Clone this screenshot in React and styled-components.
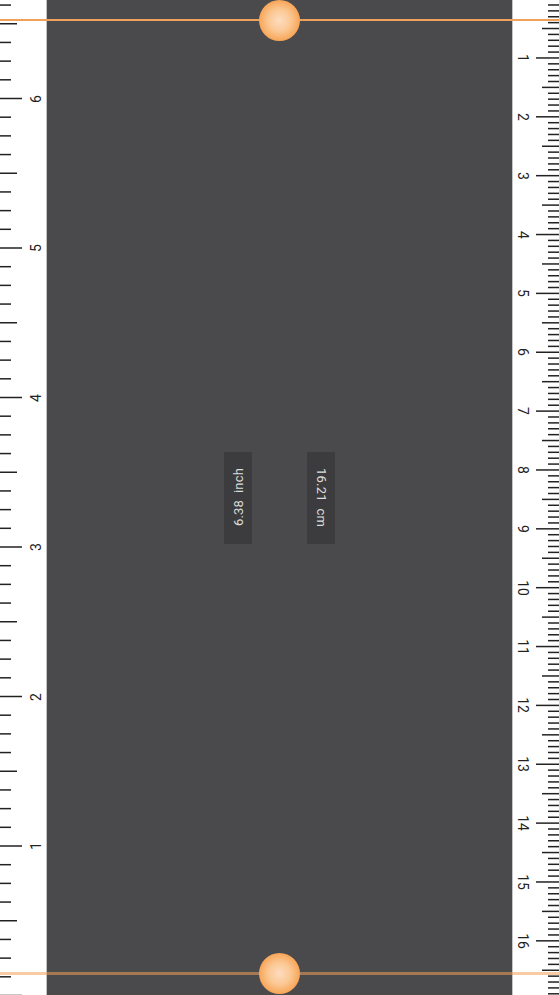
import React from "react";
import styled, { createGlobalStyle } from "styled-components";

const GlobalStyle = createGlobalStyle`
  html, body {
    margin: 0;
    padding: 0;
    background: #4a4a4c;
  }
  * {
    box-sizing: border-box;
  }
`;

const PAGE_H = 995;
const PX_PER_INCH = 149.5;
const PX_PER_CM = PX_PER_INCH / 2.54;
const INCH_ZERO = 995.5;
const CM_ZERO = -0.9;
const TOP_LINE = 20;
const BOTTOM_LINE = 973;

const Screen = styled.div`
  position: relative;
  display: flex;
  width: 559px;
  height: ${PAGE_H}px;
  overflow: hidden;
  font-family: Roboto, "Liberation Sans", sans-serif;
`;

const Ruler = styled.div`
  position: relative;
  flex: 0 0 ${(p) => p.$width}px;
  height: 100%;
  background: #ffffff;
  border-${(p) => (p.$side === "left" ? "right" : "left")}: 1px solid #c4c4c4;
`;

const TickLayer = styled.svg`
  position: absolute;
  top: 0;
  left: 0;
`;

const Number = styled.span`
  position: absolute;
  left: ${(p) => p.$x}px;
  width: 16px;
  height: 16px;
  margin-top: -8px;
  margin-left: -8px;
  display: flex;
  align-items: center;
  justify-content: center;
  font-size: 14px;
  color: #222;
  transform: rotate(${(p) => (p.$side === "left" ? -90 : 90)}deg);
`;

const Board = styled.div`
  flex: 1;
  height: 100%;
  background: #4a4a4c;
  display: flex;
  align-items: center;
  justify-content: center;
  gap: 55px;
  padding-top: ${TOP_LINE + BOTTOM_LINE - PAGE_H + 1}px;
`;

const Readout = styled.div`
  width: 28px;
  height: 92px;
  background: #3c3c3e;
  display: flex;
  align-items: center;
  justify-content: center;
`;

const ReadoutText = styled.span`
  writing-mode: vertical-rl;
  transform: ${(p) => (p.$up ? "rotate(180deg)" : "none")};
  font-size: 13px;
  letter-spacing: 0.2px;
  color: #dcdcdc;
  white-space: pre;
`;

const Guide = styled.div`
  position: absolute;
  left: 0;
  right: 0;
  top: ${(p) => p.$y}px;
  height: ${(p) => (p.$soft ? 3 : 1.5)}px;
  margin-top: ${(p) => (p.$soft ? -1.5 : -0.75)}px;
  background: ${(p) => (p.$soft ? "rgba(242, 160, 90, 0.55)" : "#f0a25c")};
  pointer-events: none;
`;

const Handle = styled.div`
  position: absolute;
  left: 259px;
  top: ${(p) => p.$y - 20.5}px;
  width: 41px;
  height: 41px;
  border-radius: 50%;
  background: radial-gradient(
    circle at 50% 50%,
    #fddcc0 0%,
    #fbc894 38%,
    #f8aa60 66%,
    #f6973c 84%,
    #f28f36 100%
  );
`;

function InchTicks() {
  const ticks = [];
  for (let i = 0; ; i++) {
    const y = INCH_ZERO - (i * PX_PER_INCH) / 8;
    if (y < -2) break;
    const len = i % 8 === 0 ? 22 : i % 4 === 0 ? 17 : 11;
    ticks.push(<line key={i} x1="0" x2={len} y1={y} y2={y} />);
  }
  return (
    <TickLayer width="46" height={PAGE_H} stroke="#222" strokeWidth="1.5">
      {ticks}
    </TickLayer>
  );
}

function CmTicks() {
  const ticks = [];
  for (let j = 0; ; j++) {
    const y = CM_ZERO + (j * PX_PER_CM) / 10;
    if (y > PAGE_H + 2) break;
    if (y < -2) continue;
    const len = j % 10 === 0 ? 23 : j % 5 === 0 ? 17 : 11;
    ticks.push(<line key={j} x1={46 - len} x2="46" y1={y} y2={y} />);
  }
  return (
    <TickLayer width="46" height={PAGE_H} stroke="#222" strokeWidth="1.5">
      {ticks}
    </TickLayer>
  );
}

export default function App() {
  const inches = [1, 2, 3, 4, 5, 6];
  const cms = Array.from({ length: 16 }, (_, k) => k + 1);

  return (
    <>
      <GlobalStyle />
      <Screen>
        <Ruler $side="left" $width={47}>
          <InchTicks />
          {inches.map((n) => (
            <Number
              key={n}
              $side="left"
              $x={36}
              style={{ top: INCH_ZERO - n * PX_PER_INCH }}
            >
              {n}
            </Number>
          ))}
        </Ruler>

        <Board>
          <Readout>
            <ReadoutText $up>6.38  inch</ReadoutText>
          </Readout>
          <Readout>
            <ReadoutText>16.21  cm</ReadoutText>
          </Readout>
        </Board>

        <Ruler $side="right" $width={47}>
          <CmTicks />
          {cms.map((n) => (
            <Number
              key={n}
              $side="right"
              $x={10}
              style={{ top: CM_ZERO + n * PX_PER_CM }}
            >
              {n}
            </Number>
          ))}
        </Ruler>

        <Guide $y={TOP_LINE} />
        <Guide $y={BOTTOM_LINE} $soft />
        <Handle $y={TOP_LINE} />
        <Handle $y={BOTTOM_LINE} />
      </Screen>
    </>
  );
}
